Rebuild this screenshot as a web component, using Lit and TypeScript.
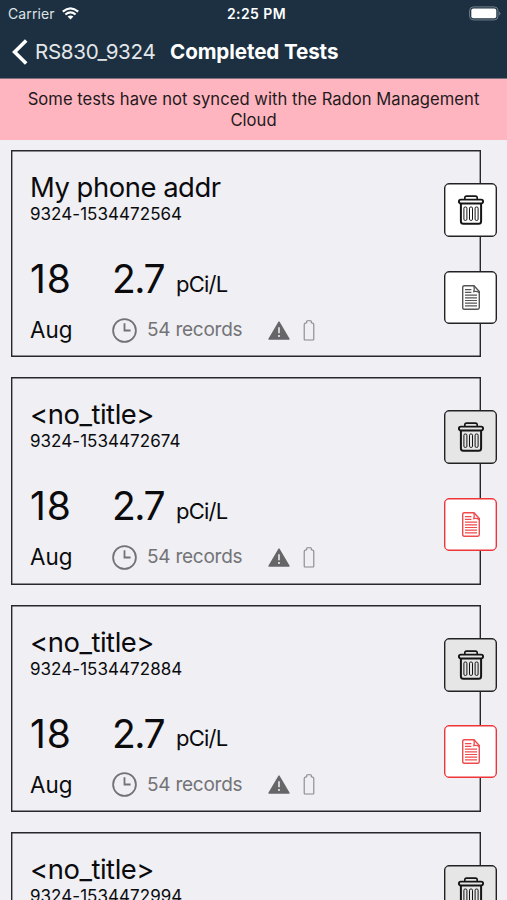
import { LitElement, html, css, svg } from "lit";
import { customElement, property } from "lit/decorators.js";
import { classMap } from "lit/directives/class-map.js";

interface TestRecord {
  title: string;
  id: string;
  synced: boolean;
}

const TESTS: TestRecord[] = [
  { title: "My phone addr", id: "9324-1534472564", synced: true },
  { title: "<no_title>", id: "9324-1534472674", synced: false },
  { title: "<no_title>", id: "9324-1534472884", synced: false },
  { title: "<no_title>", id: "9324-1534472994", synced: false },
];

const trashIcon = html`<svg width="26" height="30" viewBox="0 0 26 30" fill="none" stroke="currentColor">
  <path d="M6.8 4.4V2.8Q6.8 1.1 8.5 1.1H17.5Q19.2 1.1 19.2 2.8V4.4" stroke-width="1.6" />
  <rect x="0.9" y="4.6" width="24.2" height="3.9" rx="1.9" stroke-width="1.9" />
  <path d="M2.9 8.7V26.2Q2.9 28.7 5.4 28.7H20.6Q23.1 28.7 23.1 26.2V8.7" stroke-width="2" />
  ${[5.9, 11.5, 17.1].map(
    (x) => svg`<rect x=${x} y="12" width="3" height="13.4" rx="1.2" stroke-width="1" />`
  )}
</svg>`;

const documentIcon = html`<svg width="18" height="25" viewBox="0 0 18 25" fill="none" stroke="currentColor">
  <path d="M2.2 .7H12L17.3 6.6V22.6Q17.3 24.3 15.8 24.3H2.2Q.7 24.3 .7 22.6V2.4Q.7 .7 2.2 .7Z" stroke-width="1.4" />
  <path d="M12 .8Q12.6 4 11.8 6.6Q14.8 5.8 17.3 7.6" stroke-width="1.3" />
  <path d="M3 4.6H9.4M3 7.3H9.4M3 10.1H15M3 12.8H15M3 15.5H15M3 18.2H15M3 20.9H15" stroke-width="1.2" />
</svg>`;

@customElement("test-card")
export class TestCard extends LitElement {
  @property({ attribute: false }) test!: TestRecord;

  static styles = css`
    :host {
      display: block;
      position: relative;
      box-sizing: border-box;
      width: 470px;
      height: 207.25px;
      padding: 19px 0 0 18px;
      border: 1px solid #28282b;
      box-shadow: inset 0 0 0 0.4px #28282b;
      color: #0b0b0d;
      white-space: nowrap;
    }
    .title {
      font-size: 27.4px;
      line-height: 34px;
      letter-spacing: -0.45px;
    }
    .id {
      font-size: 17px;
      line-height: 20px;
      letter-spacing: 0.04px;
    }
    .reading,
    .details {
      display: grid;
      grid-template-columns: 82px 1fr;
    }
    .reading {
      margin-top: 31px;
      height: 48px;
      font-size: 39px;
      line-height: 48px;
      align-items: baseline;
    }
    .day {
      letter-spacing: 1px;
    }
    .value {
      letter-spacing: -1.5px;
    }
    .unit {
      font-size: 22px;
      line-height: 28px;
      margin-left: 12px;
      letter-spacing: -0.8px;
      vertical-align: 1.5px;
    }
    .details {
      margin-top: 13px;
      height: 28px;
      align-items: center;
    }
    .month {
      font-size: 22.4px;
      line-height: 28px;
    }
    .meta {
      display: flex;
      align-items: center;
      color: #737376;
    }
    .records {
      width: 97px;
      margin: 0 24px 0 10px;
      font-size: 19px;
      line-height: 28px;
      letter-spacing: -0.25px;
    }
    .battery {
      margin-left: 13px;
    }
    .meta svg {
      flex: none;
    }
    .action {
      position: absolute;
      left: 432px;
      display: flex;
      align-items: center;
      justify-content: center;
      box-sizing: border-box;
      width: 53px;
      height: 54px;
      padding: 0;
      border: 1px solid #222225;
      box-shadow: inset 0 0 0 0.4px #222225;
      border-radius: 5px;
      background: #fff;
      color: #151515;
    }
    .remove {
      top: 32px;
    }
    .report {
      top: 119.5px;
      height: 53px;
    }
    .report svg {
      color: #555;
    }
    .remove.pending {
      background: #e6e6e6;
    }
    .report.pending {
      border-color: #f03538;
      box-shadow: inset 0 0 0 0.4px #f03538;
    }
    .report.pending svg {
      color: #f04a4c;
    }
  `;

  render() {
    const pending = !this.test.synced;
    return html`
      <div class="title">${this.test.title}</div>
      <div class="id">${this.test.id}</div>
      <div class="reading">
        <span class="day">18</span>
        <span><span class="value">2.7</span><span class="unit">pCi/L</span></span>
      </div>
      <div class="details">
        <span class="month">Aug</span>
        <div class="meta">
          <svg width="25" height="25" viewBox="0 0 25 25" fill="none" stroke="currentColor" stroke-width="1.8">
            <circle cx="12.5" cy="12.5" r="11.4" />
            <path d="M12.5 5.2V12.5H18.6" />
          </svg>
          <span class="records">54 records</span>
          <svg width="22" height="19" viewBox="0 0 22 19">
            <path d="M11 1L21 18H1Z" fill="#666669" stroke="#666669" stroke-width="1.4" stroke-linejoin="round" />
            <path d="M11 6.3V12.2M11 14V16" stroke="#dcdce0" stroke-width="1.8" />
          </svg>
          <svg class="battery" width="12" height="21" viewBox="0 0 12 21" fill="none" stroke="#88888b" stroke-width="1.1">
            <path d="M3.7 2.8V1.6Q3.7 .7 4.6 .7H7.4Q8.3 .7 8.3 1.6V2.8Q10.8 3 10.8 4.6V19.2Q10.8 20 10 20H2Q1.2 20 1.2 19.2V4.6Q1.2 3 3.7 2.8Z" />
          </svg>
        </div>
      </div>
      <button class=${classMap({ action: true, remove: true, pending })} aria-label="Delete">${trashIcon}</button>
      <button class=${classMap({ action: true, report: true, pending })} aria-label="Report">${documentIcon}</button>
    `;
  }
}

@customElement("app-root")
export class AppRoot extends LitElement {
  static styles = css`
    :host {
      display: block;
      height: 900px;
      overflow: hidden;
      background: #efeff4;
      font-family: Inter, "Liberation Sans", sans-serif;
    }
    .header {
      box-sizing: border-box;
      height: 79px;
      background: #1c3041;
      border-bottom: 1px solid #7d6f7b;
      color: #fff;
      white-space: nowrap;
    }
    .status {
      display: grid;
      grid-template-columns: 1fr auto 1fr;
      align-items: center;
      height: 27px;
      padding: 0 6px 0 8px;
      font-size: 14px;
      line-height: 27px;
    }
    .carrier {
      display: flex;
      align-items: center;
      gap: 7px;
      color: #dfe3e6;
      letter-spacing: 0.1px;
    }
    .time {
      padding-left: 4px;
      font-weight: 600;
      letter-spacing: 0.4px;
    }
    .charge {
      justify-self: end;
    }
    .nav {
      display: flex;
      align-items: center;
      height: 49px;
      padding-left: 12px;
    }
    .back {
      margin-left: 7px;
      width: 135px;
      font-size: 20.6px;
      letter-spacing: -0.3px;
      color: #e3e7ea;
    }
    .heading {
      font-size: 20.6px;
      font-weight: 650;
      letter-spacing: -0.1px;
    }
    .banner {
      box-sizing: border-box;
      height: 61px;
      padding: 10px 20px 0;
      background: #ffb5c0;
      color: #241a1c;
      font-size: 16.6px;
      line-height: 20.6px;
      letter-spacing: 0.03px;
      text-align: center;
    }
    .list {
      display: flex;
      flex-direction: column;
      gap: 20px;
      padding: 10px 0 0 11px;
    }
  `;

  render() {
    return html`
      <div class="header">
        <div class="status">
          <div class="carrier">
            <span>Carrier</span>
            <svg width="17" height="13" viewBox="0 0 17 13" fill="none" stroke="#fff" stroke-width="2.1">
              <path d="M.8 4.6Q8.5 -2 16.2 4.6" />
              <path d="M3.4 7.5Q8.5 3.2 13.6 7.5" />
              <path d="M8.5 12.4L5.6 9.6Q8.5 7.3 11.4 9.6Z" fill="#fff" stroke="none" />
            </svg>
          </div>
          <div class="time">2:25 PM</div>
          <svg class="charge" width="32" height="15" viewBox="0 0 32 15">
            <rect x=".6" y=".9" width="28.4" height="13" rx="3.8" fill="none" stroke="#74818b" />
            <rect x="2.3" y="2.6" width="25" height="9.6" rx="2" fill="#fff" />
            <path d="M30.2 5.4Q32.6 7.4 30.2 9.4Z" fill="#74818b" />
          </svg>
        </div>
        <div class="nav">
          <svg width="16" height="26" viewBox="0 0 16 26" fill="none" stroke="#fff" stroke-width="3.6">
            <path d="M14.2 1.5L2.6 13L14.2 24.5" />
          </svg>
          <span class="back">RS830_9324</span>
          <span class="heading">Completed Tests</span>
        </div>
      </div>
      <div class="banner">Some tests have not synced with the Radon Management Cloud</div>
      <div class="list">${TESTS.map((test) => html`<test-card .test=${test}></test-card>`)}</div>
    `;
  }
}
